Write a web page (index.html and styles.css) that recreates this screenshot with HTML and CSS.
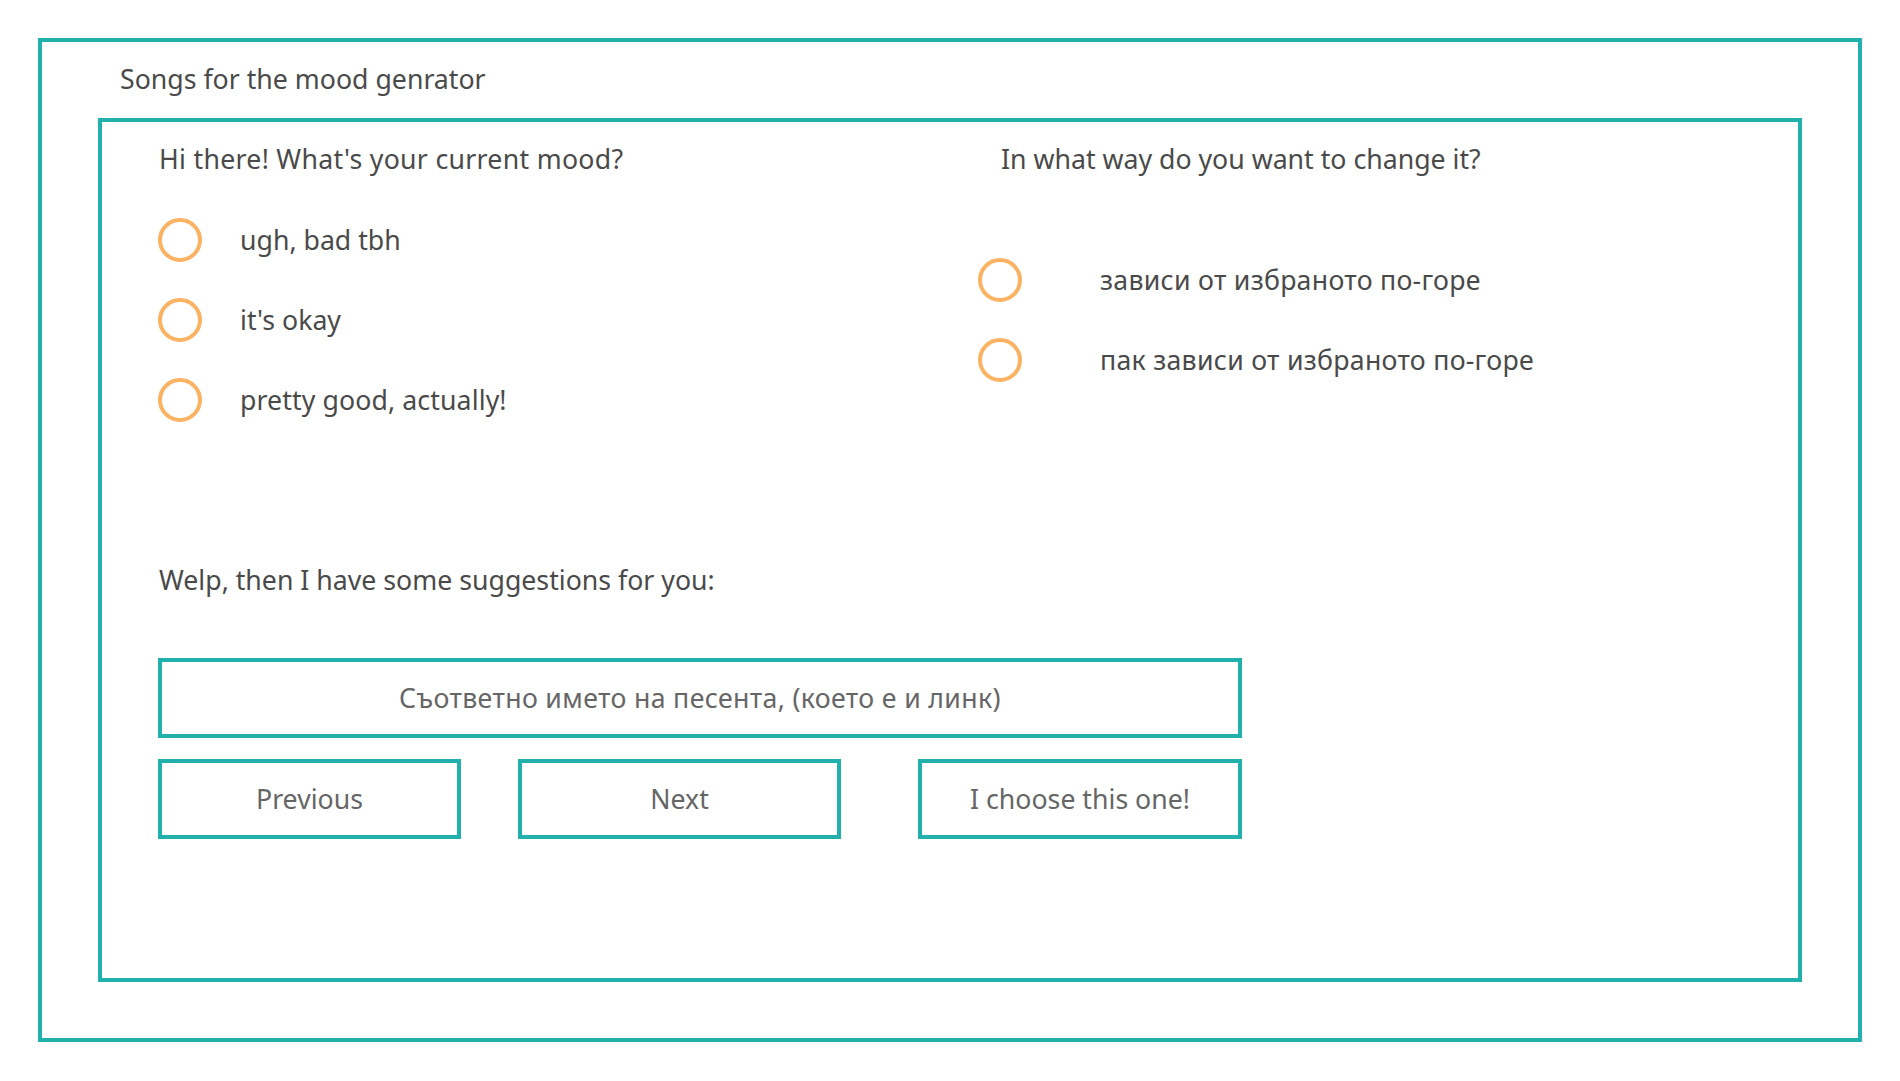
FILE: index.html
```html
<!DOCTYPE html>
<html lang="en">
<head>
<meta charset="utf-8">
<title>Songs for the mood genrator</title>
<link rel="stylesheet" href="styles.css">
</head>
<body>
<div class="frame">
  <div class="title">Songs for the mood genrator</div>
  <div class="panel">
    <div class="questions">
      <div class="col col-left">
        <div class="q q-left">Hi there! What's your current mood?</div>
        <ul class="opts">
          <li class="opt"><span class="radio"></span><span class="label">ugh, bad tbh</span></li>
          <li class="opt"><span class="radio"></span><span class="label">it's okay</span></li>
          <li class="opt"><span class="radio"></span><span class="label label-wide">pretty good, actually!</span></li>
        </ul>
      </div>
      <div class="col col-right">
        <div class="q q-right">In what way do you want to change it?</div>
        <ul class="opts opts-right">
          <li class="opt"><span class="radio"></span><span class="label">зависи от избраното по-горе</span></li>
          <li class="opt"><span class="radio"></span><span class="label">пак зависи от избраното по-горе</span></li>
        </ul>
      </div>
    </div>
    <div class="welp">Welp, then I have some suggestions for you:</div>
    <div class="song">Съответно името на песента, (което е и линк)</div>
    <div class="btns">
      <div class="btn btn-prev">Previous</div>
      <div class="btn btn-next">Next</div>
      <div class="btn btn-choose">I choose this one!</div>
    </div>
  </div>
</div>
</body>
</html>
```
FILE: styles.css
```css
* { box-sizing: border-box; }

html, body {
  margin: 0;
  padding: 0;
  background: #ffffff;
}

body {
  font-family: "Noto Sans", "Open Sans", sans-serif;
  font-size: 26.7px;
  line-height: 36px;
  color: #4a4a4a;
}

.frame {
  margin: 38px;
  height: 1004px;
  border: 4px solid #22b0ac;
  padding: 18px 56px 0 56px;
}

.title {
  padding: 1px 0 0 22px;
  height: 36px;
}

.panel {
  margin-top: 22px;
  height: 864px;
  border: 4px solid #22b0ac;
  padding: 18px 56px 0 56px;
}

.questions {
  display: grid;
  grid-template-columns: 820px 1fr;
}

.q {
  height: 36px;
  padding: 1px 0 0 1px;
}

.q-left {
  letter-spacing: 0.29px;
}

.q-right {
  padding-left: 23px;
}

.opts {
  list-style: none;
  margin: 24px 0 0 0;
  padding: 0;
}

.opts-right {
  margin-top: 64px;
}

.opt {
  height: 80px;
  display: flex;
  align-items: center;
  gap: 38px;
}

.label-wide {
  letter-spacing: 0.1px;
}

.opts-right .opt {
  gap: 78px;
}

.opts-right .label {
  letter-spacing: 0.27px;
}

.radio {
  width: 44px;
  height: 44px;
  border: 4px solid #fab263;
  border-radius: 50%;
  flex: none;
}

.welp {
  margin-top: 121px;
  height: 36px;
  padding: 1px 0 0 1px;
}

.song {
  margin-top: 61px;
  width: 1084px;
  height: 80px;
  border: 4px solid #22b0ac;
  display: flex;
  align-items: center;
  justify-content: center;
  color: #666666;
  letter-spacing: 0.35px;
}

.btns {
  margin-top: 21px;
  width: 1084px;
  display: flex;
}

.btn {
  height: 80px;
  border: 4px solid #22b0ac;
  display: flex;
  align-items: center;
  justify-content: center;
  color: #666666;
}

.btn-prev { width: 303px; }
.btn-next { width: 323px; margin-left: 57px; }
.btn-choose { width: 324px; margin-left: auto; }
```
